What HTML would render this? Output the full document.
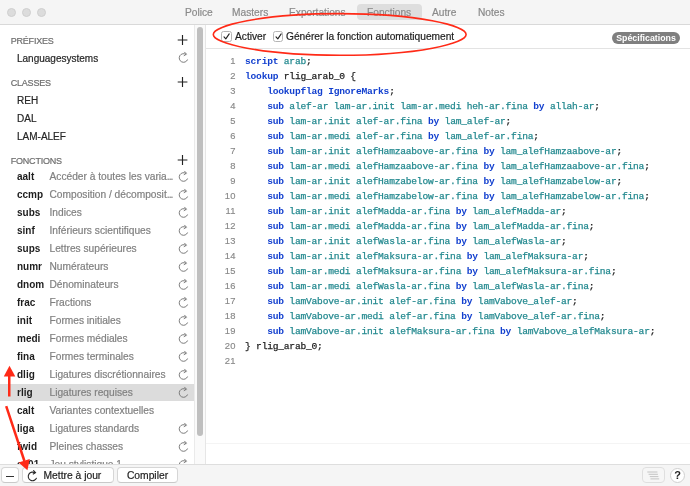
<!DOCTYPE html>
<html lang="fr">
<head>
<meta charset="utf-8">
<title>Fonctions</title>
<style>
html,body{margin:0;padding:0;}
body{width:690px;height:486px;overflow:hidden;background:#fff;font-family:"Liberation Sans",sans-serif;font-size:10px;color:#262626;position:relative;}
.abs{position:absolute;}
#sbin,.tab,.cbl,.cl,.ln,.btn,#spec,#help{will-change:transform;}
.tab,.cbl,.hdr,.row .t,.row .d,.btn{-webkit-text-stroke:0.2px;}
#titlebar{left:0;top:0;width:690px;height:24px;background:#f5f5f5;border-bottom:1px solid #d9d9d9;}
.tl{position:absolute;top:7.5px;width:9px;height:9px;border-radius:50%;background:#dcdcdc;border:0.5px solid #cfcfcf;box-sizing:border-box;}
.tab{position:absolute;top:1px;height:24px;line-height:24px;font-size:10.2px;color:#8a8a8a;white-space:nowrap;}
#tabsel{left:357.3px;top:4px;width:65px;height:15.5px;background:#dedede;border-radius:4px;}
#sidebar{left:0;top:25px;width:195px;height:439px;background:#fff;overflow:hidden;}
.hdr{position:absolute;left:10.7px;font-size:9px;letter-spacing:-0.2px;color:#6e6e6e;height:18px;line-height:18px;white-space:nowrap;}
.row{position:absolute;left:0;width:195px;height:18px;line-height:18px;white-space:nowrap;}
.row .t{position:absolute;left:17px;color:#262626;}
.row .k{position:absolute;left:17px;font-weight:bold;color:#1e1e1e;}
.row .d{position:absolute;left:49.5px;color:#808080;font-size:10.2px;}
.row u{text-decoration:none;letter-spacing:-0.9px;}
#selbg{left:0;top:359px;width:194.5px;height:16.7px;background:#dcdcdc;}
#sbin{left:0;top:0;width:195px;height:460px;transform:translateY(0.6px);}
.plus{position:absolute;left:177px;width:12px;height:12px;}
.rf{position:absolute;left:178.2px;top:3.2px;width:11px;height:12px;}
#track{left:194.3px;top:25px;width:11.6px;height:439px;background:#fafafa;border-left:1px solid #eaeaea;border-right:1px solid #e6e6e6;box-sizing:border-box;}
#thumb{left:197.3px;top:27px;width:5.7px;height:409.3px;border-radius:3px;background:#bfbfbf;}
#toolbar{left:206px;top:25px;width:484px;height:23px;background:#fff;border-bottom:1px solid #e3e3e3;}
.cb{position:absolute;top:31.2px;width:10.4px;height:10.4px;box-sizing:border-box;border:1px solid #b5b5b5;border-radius:2.5px;background:#fff;}
.cbl{position:absolute;top:25px;height:24px;line-height:24px;font-size:10.2px;color:#1e1e1e;white-space:nowrap;}
.ck{position:absolute;left:0;top:0;width:9px;height:9px;}
#spec{left:612px;top:31.5px;width:68px;height:12px;border-radius:6px;background:#7f7f7f;color:#fff;font-weight:bold;font-size:8.8px;line-height:12px;text-align:center;}
#code{left:206px;top:49px;width:484px;height:394.2px;background:#fff;border-bottom:1px solid #f4f4f4;}
.ln{-webkit-text-stroke:0.15px;position:absolute;left:207px;width:28.5px;text-align:right;height:15px;line-height:14.4px;font-size:9.4px;letter-spacing:0.15px;color:#888;}
.cl{position:absolute;left:245px;height:15px;line-height:15px;font-family:"Liberation Mono",monospace;font-size:9.6px;letter-spacing:-0.214px;white-space:pre;color:#23898f;-webkit-text-stroke:0.25px;}
.cl b{color:#1340cf;font-weight:bold;-webkit-text-stroke:0;}
.cl i{font-style:normal;color:#1e1e1e;}
#help{left:670.3px;top:467.6px;width:15.4px;height:15.4px;box-sizing:border-box;border-radius:50%;background:#fff;border:1px solid #cfcfcf;font-size:11px;font-weight:bold;line-height:13px;text-align:center;color:#222;}
#bottombar{left:0;top:464.4px;width:690px;height:22px;background:#f5f5f5;border-top:1px solid #dedede;box-sizing:border-box;}
.btn{position:absolute;top:467.3px;height:15.6px;box-sizing:border-box;background:#fff;border:1px solid #d6d6d6;border-bottom-color:#c9c9c9;border-radius:4px;font-size:10.3px;line-height:16.6px;color:#1e1e1e;text-align:center;white-space:nowrap;}
</style>
</head>
<body>
<div id="titlebar" class="abs">
  <div class="tl" style="left:6.8px"></div><div class="tl" style="left:21.8px"></div><div class="tl" style="left:36.6px"></div>
  <div id="tabsel" class="abs"></div>
  <div class="tab" style="left:185px">Police</div>
  <div class="tab" style="left:232px">Masters</div>
  <div class="tab" style="left:289px">Exportations</div>
  <div class="tab" style="left:367px">Fonctions</div>
  <div class="tab" style="left:432px">Autre</div>
  <div class="tab" style="left:478px">Notes</div>
</div>

<div id="sidebar" class="abs">
<div class="abs" id="selbg"></div>
<div class="abs" id="sbin">
  <div class="hdr" style="top:6px">PRÉFIXES</div>
  <svg class="plus" style="top:9px" viewBox="0 0 12 12"><path d="M5.5 0.4V10.3M0.7 5.4H10.4" stroke="#222" stroke-width="1.15" fill="none"/></svg>
  <div class="row" style="top:24px"><span class="t">Languagesystems</span><svg class="rf" style="top:1.9px" viewBox="0 0 11 12"><path d="M8.2 3A4.3 4.3 0 1 0 9.57 7.9" stroke="#747474" stroke-width="0.95" fill="none"/><path d="M6.3 0.3L8.5 2.6L5.8 4.2" stroke="#747474" stroke-width="0.95" fill="none"/></svg></div>
  <div class="hdr" style="top:48px">CLASSES</div>
  <svg class="plus" style="top:51px" viewBox="0 0 12 12"><path d="M5.5 0.4V10.3M0.7 5.4H10.4" stroke="#222" stroke-width="1.15" fill="none"/></svg>
  <div class="row" style="top:66px"><span class="t">REH</span></div>
  <div class="row" style="top:84px"><span class="t">DAL</span></div>
  <div class="row" style="top:102px"><span class="t">LAM-ALEF</span></div>
  <div class="hdr" style="top:126px">FONCTIONS</div>
  <svg class="plus" style="top:129px" viewBox="0 0 12 12"><path d="M5.5 0.4V10.3M0.7 5.4H10.4" stroke="#222" stroke-width="1.15" fill="none"/></svg>
  <div class="row" style="top:142px"><span class="k">aalt</span><span class="d">Accéder à toutes les varia<u>...</u></span><svg class="rf" viewBox="0 0 11 12"><path d="M8.2 3A4.3 4.3 0 1 0 9.57 7.9" stroke="#747474" stroke-width="0.95" fill="none"/><path d="M6.3 0.3L8.5 2.6L5.8 4.2" stroke="#747474" stroke-width="0.95" fill="none"/></svg></div>
  <div class="row" style="top:160px"><span class="k">ccmp</span><span class="d">Composition / décomposit<u>...</u></span><svg class="rf" viewBox="0 0 11 12"><path d="M8.2 3A4.3 4.3 0 1 0 9.57 7.9" stroke="#747474" stroke-width="0.95" fill="none"/><path d="M6.3 0.3L8.5 2.6L5.8 4.2" stroke="#747474" stroke-width="0.95" fill="none"/></svg></div>
  <div class="row" style="top:178px"><span class="k">subs</span><span class="d">Indices</span><svg class="rf" viewBox="0 0 11 12"><path d="M8.2 3A4.3 4.3 0 1 0 9.57 7.9" stroke="#747474" stroke-width="0.95" fill="none"/><path d="M6.3 0.3L8.5 2.6L5.8 4.2" stroke="#747474" stroke-width="0.95" fill="none"/></svg></div>
  <div class="row" style="top:196px"><span class="k">sinf</span><span class="d">Inférieurs scientifiques</span><svg class="rf" viewBox="0 0 11 12"><path d="M8.2 3A4.3 4.3 0 1 0 9.57 7.9" stroke="#747474" stroke-width="0.95" fill="none"/><path d="M6.3 0.3L8.5 2.6L5.8 4.2" stroke="#747474" stroke-width="0.95" fill="none"/></svg></div>
  <div class="row" style="top:214px"><span class="k">sups</span><span class="d">Lettres supérieures</span><svg class="rf" viewBox="0 0 11 12"><path d="M8.2 3A4.3 4.3 0 1 0 9.57 7.9" stroke="#747474" stroke-width="0.95" fill="none"/><path d="M6.3 0.3L8.5 2.6L5.8 4.2" stroke="#747474" stroke-width="0.95" fill="none"/></svg></div>
  <div class="row" style="top:232px"><span class="k">numr</span><span class="d">Numérateurs</span><svg class="rf" viewBox="0 0 11 12"><path d="M8.2 3A4.3 4.3 0 1 0 9.57 7.9" stroke="#747474" stroke-width="0.95" fill="none"/><path d="M6.3 0.3L8.5 2.6L5.8 4.2" stroke="#747474" stroke-width="0.95" fill="none"/></svg></div>
  <div class="row" style="top:250px"><span class="k">dnom</span><span class="d">Dénominateurs</span><svg class="rf" viewBox="0 0 11 12"><path d="M8.2 3A4.3 4.3 0 1 0 9.57 7.9" stroke="#747474" stroke-width="0.95" fill="none"/><path d="M6.3 0.3L8.5 2.6L5.8 4.2" stroke="#747474" stroke-width="0.95" fill="none"/></svg></div>
  <div class="row" style="top:268px"><span class="k">frac</span><span class="d">Fractions</span><svg class="rf" viewBox="0 0 11 12"><path d="M8.2 3A4.3 4.3 0 1 0 9.57 7.9" stroke="#747474" stroke-width="0.95" fill="none"/><path d="M6.3 0.3L8.5 2.6L5.8 4.2" stroke="#747474" stroke-width="0.95" fill="none"/></svg></div>
  <div class="row" style="top:286px"><span class="k">init</span><span class="d">Formes initiales</span><svg class="rf" viewBox="0 0 11 12"><path d="M8.2 3A4.3 4.3 0 1 0 9.57 7.9" stroke="#747474" stroke-width="0.95" fill="none"/><path d="M6.3 0.3L8.5 2.6L5.8 4.2" stroke="#747474" stroke-width="0.95" fill="none"/></svg></div>
  <div class="row" style="top:304px"><span class="k">medi</span><span class="d">Formes médiales</span><svg class="rf" viewBox="0 0 11 12"><path d="M8.2 3A4.3 4.3 0 1 0 9.57 7.9" stroke="#747474" stroke-width="0.95" fill="none"/><path d="M6.3 0.3L8.5 2.6L5.8 4.2" stroke="#747474" stroke-width="0.95" fill="none"/></svg></div>
  <div class="row" style="top:322px"><span class="k">fina</span><span class="d">Formes terminales</span><svg class="rf" viewBox="0 0 11 12"><path d="M8.2 3A4.3 4.3 0 1 0 9.57 7.9" stroke="#747474" stroke-width="0.95" fill="none"/><path d="M6.3 0.3L8.5 2.6L5.8 4.2" stroke="#747474" stroke-width="0.95" fill="none"/></svg></div>
  <div class="row" style="top:340px"><span class="k">dlig</span><span class="d">Ligatures discrétionnaires</span><svg class="rf" viewBox="0 0 11 12"><path d="M8.2 3A4.3 4.3 0 1 0 9.57 7.9" stroke="#747474" stroke-width="0.95" fill="none"/><path d="M6.3 0.3L8.5 2.6L5.8 4.2" stroke="#747474" stroke-width="0.95" fill="none"/></svg></div>
  <div class="row" style="top:358px"><span class="k">rlig</span><span class="d">Ligatures requises</span><svg class="rf" viewBox="0 0 11 12"><path d="M8.2 3A4.3 4.3 0 1 0 9.57 7.9" stroke="#747474" stroke-width="0.95" fill="none"/><path d="M6.3 0.3L8.5 2.6L5.8 4.2" stroke="#747474" stroke-width="0.95" fill="none"/></svg></div>
  <div class="row" style="top:376px"><span class="k">calt</span><span class="d">Variantes contextuelles</span></div>
  <div class="row" style="top:394px"><span class="k">liga</span><span class="d">Ligatures standards</span><svg class="rf" viewBox="0 0 11 12"><path d="M8.2 3A4.3 4.3 0 1 0 9.57 7.9" stroke="#747474" stroke-width="0.95" fill="none"/><path d="M6.3 0.3L8.5 2.6L5.8 4.2" stroke="#747474" stroke-width="0.95" fill="none"/></svg></div>
  <div class="row" style="top:412px"><span class="k">fwid</span><span class="d">Pleines chasses</span><svg class="rf" viewBox="0 0 11 12"><path d="M8.2 3A4.3 4.3 0 1 0 9.57 7.9" stroke="#747474" stroke-width="0.95" fill="none"/><path d="M6.3 0.3L8.5 2.6L5.8 4.2" stroke="#747474" stroke-width="0.95" fill="none"/></svg></div>
  <div class="row" style="top:430px"><span class="k">ss01</span><span class="d">Jeu stylistique 1</span><svg class="rf" viewBox="0 0 11 12"><path d="M8.2 3A4.3 4.3 0 1 0 9.57 7.9" stroke="#747474" stroke-width="0.95" fill="none"/><path d="M6.3 0.3L8.5 2.6L5.8 4.2" stroke="#747474" stroke-width="0.95" fill="none"/></svg></div>
</div>
</div>

<div id="track" class="abs"></div>
<div id="thumb" class="abs"></div>

<div id="toolbar" class="abs"></div>
<div class="cb" style="left:221.3px"><svg class="ck" viewBox="0 0 9 9"><path d="M2 4.8L3.8 6.9L7.2 1.9" stroke="#222" stroke-width="1.1" fill="none" stroke-linecap="round" stroke-linejoin="round"/></svg></div>
<div class="cbl" style="left:235px">Activer</div>
<div class="cb" style="left:273px"><svg class="ck" viewBox="0 0 9 9"><path d="M2 4.8L3.8 6.9L7.2 1.9" stroke="#222" stroke-width="1.1" fill="none" stroke-linecap="round" stroke-linejoin="round"/></svg></div>
<div class="cbl" style="left:286px">Générer la fonction automatiquement</div>
<div id="spec" class="abs">Spécifications</div>

<div id="code" class="abs"></div>
<div class="ln" style="top:54px">1</div><div class="cl" style="top:54px"><b>script</b> arab<i>;</i></div>
<div class="ln" style="top:69px">2</div><div class="cl" style="top:69px"><b>lookup</b> <i>rlig_arab_0 {</i></div>
<div class="ln" style="top:84px">3</div><div class="cl" style="top:84px">    <b>lookupflag IgnoreMarks</b><i>;</i></div>
<div class="ln" style="top:99px">4</div><div class="cl" style="top:99px">    <b>sub</b> alef-ar lam-ar.init lam-ar.medi heh-ar.fina <b>by</b> allah-ar<i>;</i></div>
<div class="ln" style="top:114px">5</div><div class="cl" style="top:114px">    <b>sub</b> lam-ar.init alef-ar.fina <b>by</b> lam_alef-ar<i>;</i></div>
<div class="ln" style="top:129px">6</div><div class="cl" style="top:129px">    <b>sub</b> lam-ar.medi alef-ar.fina <b>by</b> lam_alef-ar.fina<i>;</i></div>
<div class="ln" style="top:144px">7</div><div class="cl" style="top:144px">    <b>sub</b> lam-ar.init alefHamzaabove-ar.fina <b>by</b> lam_alefHamzaabove-ar<i>;</i></div>
<div class="ln" style="top:159px">8</div><div class="cl" style="top:159px">    <b>sub</b> lam-ar.medi alefHamzaabove-ar.fina <b>by</b> lam_alefHamzaabove-ar.fina<i>;</i></div>
<div class="ln" style="top:174px">9</div><div class="cl" style="top:174px">    <b>sub</b> lam-ar.init alefHamzabelow-ar.fina <b>by</b> lam_alefHamzabelow-ar<i>;</i></div>
<div class="ln" style="top:189px">10</div><div class="cl" style="top:189px">    <b>sub</b> lam-ar.medi alefHamzabelow-ar.fina <b>by</b> lam_alefHamzabelow-ar.fina<i>;</i></div>
<div class="ln" style="top:204px">11</div><div class="cl" style="top:204px">    <b>sub</b> lam-ar.init alefMadda-ar.fina <b>by</b> lam_alefMadda-ar<i>;</i></div>
<div class="ln" style="top:219px">12</div><div class="cl" style="top:219px">    <b>sub</b> lam-ar.medi alefMadda-ar.fina <b>by</b> lam_alefMadda-ar.fina<i>;</i></div>
<div class="ln" style="top:234px">13</div><div class="cl" style="top:234px">    <b>sub</b> lam-ar.init alefWasla-ar.fina <b>by</b> lam_alefWasla-ar<i>;</i></div>
<div class="ln" style="top:249px">14</div><div class="cl" style="top:249px">    <b>sub</b> lam-ar.init alefMaksura-ar.fina <b>by</b> lam_alefMaksura-ar<i>;</i></div>
<div class="ln" style="top:264px">15</div><div class="cl" style="top:264px">    <b>sub</b> lam-ar.medi alefMaksura-ar.fina <b>by</b> lam_alefMaksura-ar.fina<i>;</i></div>
<div class="ln" style="top:279px">16</div><div class="cl" style="top:279px">    <b>sub</b> lam-ar.medi alefWasla-ar.fina <b>by</b> lam_alefWasla-ar.fina<i>;</i></div>
<div class="ln" style="top:294px">17</div><div class="cl" style="top:294px">    <b>sub</b> lamVabove-ar.init alef-ar.fina <b>by</b> lamVabove_alef-ar<i>;</i></div>
<div class="ln" style="top:309px">18</div><div class="cl" style="top:309px">    <b>sub</b> lamVabove-ar.medi alef-ar.fina <b>by</b> lamVabove_alef-ar.fina<i>;</i></div>
<div class="ln" style="top:324px">19</div><div class="cl" style="top:324px">    <b>sub</b> lamVabove-ar.init alefMaksura-ar.fina <b>by</b> lamVabove_alefMaksura-ar<i>;</i></div>
<div class="ln" style="top:339px">20</div><div class="cl" style="top:339px"><i>} rlig_arab_0;</i></div>
<div class="ln" style="top:354px">21</div><div class="cl" style="top:354px"></div>

<div id="bottombar" class="abs"></div>
<div class="btn" style="left:1.1px;width:17.7px"><div class="abs" style="left:3.8px;top:7.6px;width:8.6px;height:1.2px;background:#333"></div></div>
<div class="btn" style="left:22px;width:92px;text-align:left;padding-left:20.5px"><svg class="abs" style="left:4px;top:1.8px;width:11px;height:12px" viewBox="0 0 11 12"><path d="M8.2 3A4.3 4.3 0 1 0 9.57 7.9" stroke="#2a2a2a" stroke-width="1.1" fill="none"/><path d="M6.3 0.3L8.5 2.6L5.8 4.2" stroke="#2a2a2a" stroke-width="1.1" fill="none"/></svg>Mettre à jour</div>
<div class="btn" style="left:117px;width:61px">Compiler</div>
<div class="btn" style="left:641.7px;width:23px;background:#f6f6f6;border-color:#dfdfdf"><svg class="abs" style="left:4.3px;top:3.2px;width:13px;height:9px" viewBox="0 0 13 9"><path d="M0.3 1H10.4M1.6 3.3H10.9M2.8 5.6H11.4M3.5 7.9H12.2" stroke="#bdbdbd" stroke-width="0.9" fill="none"/></svg></div>
<div class="abs" id="help">?</div>
<svg class="abs" id="overlay" style="left:0;top:0;width:690px;height:486px" viewBox="0 0 690 486">
  <path d="M213.3 34.5C213.3 25.7 261.3 13.6 339.7 13.6C418.1 13.6 466.1 25.7 466.1 34.5C466.1 43.2 418.1 55.3 339.7 55.3C261.3 55.3 213.3 43.2 213.3 34.5Z" fill="none" stroke="#ff2a17" stroke-width="1.6"/>
  <path d="M9.25 396.5V375" stroke="#ff2a17" stroke-width="2.5" fill="none"/>
  <path d="M9.5 365.8L15.3 376.6H3.8Z" fill="#ff2a17"/>
  <path d="M6.2 406.2L24.4 461" stroke="#ff2a17" stroke-width="2.5" fill="none"/>
  <path d="M27.4 470.2L18.6 462.6L29.8 458.9Z" fill="#ff2a17"/>
</svg>
</body>
</html>
